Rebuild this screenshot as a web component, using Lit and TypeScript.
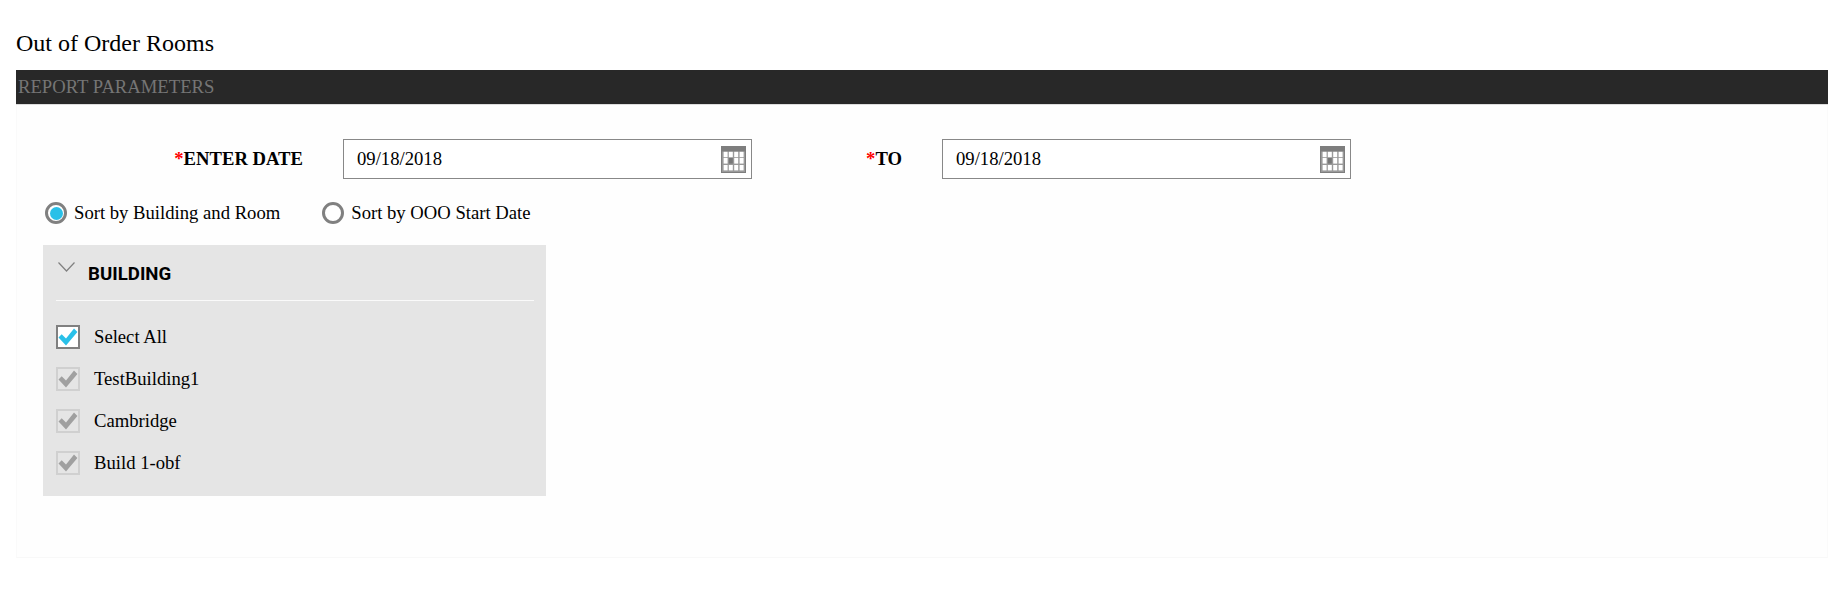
import { LitElement, html, css, svg } from "lit";
import { customElement } from "lit/decorators.js";

const cal = html`<svg class="cal" viewBox="0 0 25 27" width="25" height="27">
  <rect width="25" height="27" fill="#7e7e7e"/>
  <rect x="1" y="5.5" width="23" height="20.5" fill="#9a9a9a"/>
  ${[2.6, 7.8, 13.2, 18.6].map((x, c) =>
    [5.8, 12, 19].map((y, r) =>
      svg`<rect x=${x} y=${y} width="4" height=${r === 1 ? 5.6 : 5.4} fill=${c === 1 && r === 1 ? "#777" : "#fff"}/>`
    )
  )}
</svg>`;

const check = html`<svg viewBox="0 0 20 20" width="20" height="20"><path d="M.5 10.5l3.2-3.2 4.3 4.3L16 1.5l3.4 3.4L8 18.5z" fill="currentColor"/></svg>`;

@customElement("app-root")
export class AppRoot extends LitElement {
  static styles = css`
    :host { display: block; font-family: "Liberation Serif", "Times New Roman", serif; color: #000; background: #fff; height: 593px; overflow: hidden; }
    .page { padding: 30px 7px 0 16px; box-sizing: border-box; }
    h1 { margin: 0; font-size: 24px; font-weight: 400; line-height: 27px; height: 40px; }
    .bar { background: #282828; color: #757575; font-size: 18.67px; height: 34px; line-height: 33px; padding-left: 2px; border-bottom: 1px solid #ddd; }
    .panel { border-left: 1px solid #fafafa; border-right: 1px solid #fafafa; border-bottom: 1px solid #f8f8f8; background: #fefefe; height: 453px; box-sizing: border-box; padding: 34px 0 0 26px; }
    .dates { display: flex; align-items: center; height: 40px; }
    .label { font-weight: 700; font-size: 18.67px; white-space: nowrap; text-align: right; }
    .label b { color: #f00; }
    .l1 { width: 260px; }
    .l2 { width: 150px; }
    .input { box-sizing: border-box; width: 409px; height: 40px; border: 1px solid #888; background: #fff; display: flex; align-items: center; justify-content: space-between; padding: 0 5px 0 13px; font-size: 18.67px; margin-left: 40px; }
    .radios { display: flex; align-items: center; gap: 42px; margin: 19px 0 0 2px; height: 30px; font-size: 18.67px; }
    .radio { display: flex; align-items: center; gap: 7px; }
    .dot { box-sizing: border-box; width: 22px; height: 22px; border: 3px solid #808080; border-radius: 50%; background: #fff; display: flex; align-items: center; justify-content: center; }
    .dot i { width: 13px; height: 13px; border-radius: 50%; background: #29c0e8; display: block; }
    .box { width: 503px; box-sizing: border-box; margin-top: 17px; background: #e5e5e5; padding: 0 12px 0 13px; height: 251px; }
    .head { display: flex; align-items: center; height: 55px; border-bottom: 1px solid #fafafa; }
    .head svg { margin: -12px 13px 0 2px; }
    .head span { font-family: Roboto, sans-serif; font-weight: 700; font-size: 18.67px; padding-top: 2px; }
    .rows { padding-top: 21px; display: flex; flex-direction: column; gap: 12px; }
    .row { display: flex; align-items: center; gap: 14px; height: 30px; font-size: 18.67px; }
    .cb { box-sizing: border-box; width: 24px; height: 24px; border: 2px solid #d0d0d0; display: flex; align-items: center; justify-content: center; color: #a0a0a0; }
    .cb.on { background: #fff; border-color: #808080; color: #29c0e8; }
  `;
  render() {
    const rows = ["TestBuilding1", "Cambridge", "Build 1-obf"];
    return html`<div class="page">
      <h1>Out of Order Rooms</h1>
      <div class="bar">REPORT PARAMETERS</div>
      <div class="panel">
        <div class="dates">
          <div class="label l1"><b>*</b>ENTER DATE</div>
          <div class="input"><span>09/18/2018</span>${cal}</div>
          <div class="label l2"><b>*</b>TO</div>
          <div class="input"><span>09/18/2018</span>${cal}</div>
        </div>
        <div class="radios">
          <div class="radio"><span class="dot"><i></i></span>Sort by Building and Room</div>
          <div class="radio"><span class="dot"></span>Sort by OOO Start Date</div>
        </div>
        <div class="box">
          <div class="head">
            <svg width="17" height="10" viewBox="0 0 17 10"><path d="M.5.5L8.5 9 16.5.5" fill="none" stroke="#808080" stroke-width="1.2"/></svg>
            <span>BUILDING</span>
          </div>
          <div class="rows">
            <div class="row"><span class="cb on">${check}</span>Select All</div>
            ${rows.map((r) => html`<div class="row"><span class="cb">${check}</span>${r}</div>`)}
          </div>
        </div>
      </div>
    </div>`;
  }
}
